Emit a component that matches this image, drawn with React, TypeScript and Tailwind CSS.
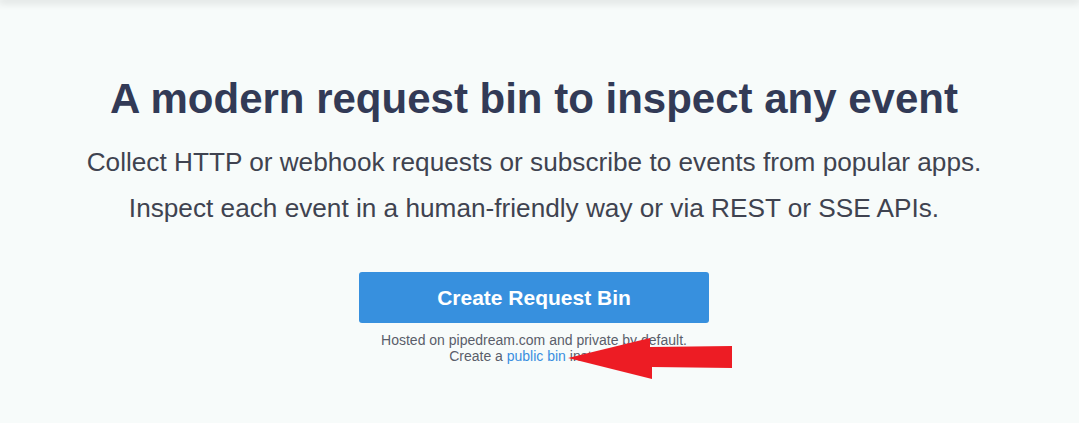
export default function App() {
  return (
    <div className="min-h-[423px] w-full bg-[#f7fbfa] relative overflow-hidden" style={{ fontFamily: '"Liberation Sans", Arial, sans-serif' }}>
      <div className="h-0 w-full shadow-[0_0_8px_2px_rgba(0,0,0,0.18)]" />
      <div className="flex flex-col items-center pt-[73px] pr-[11px] text-center">
        <h1 className="text-[42px] leading-[52px] font-bold text-[#323a56]">A modern request bin to inspect any event</h1>
        <p className="mt-[21px] text-[26.2px] leading-[32px] text-[#3f4350]">Collect HTTP or webhook requests or subscribe to events from popular apps.</p>
        <p className="mt-[14px] text-[26.2px] leading-[32px] text-[#3f4350]">Inspect each event in a human-friendly way or via REST or SSE APIs.</p>
        <button className="mt-[48px] w-[350px] h-[51px] rounded-[3px] bg-[#3790de] text-white font-bold text-[21px]">Create Request Bin</button>
        <div className="mt-[9px] text-[14px] leading-[16px] text-[#5a5e6a]">
          <div>Hosted on pipedream.com and private by default.</div>
          <div>
            Create a <a className="text-[#3a8ee0]">public bin</a> instead.
          </div>
        </div>
      </div>
      <svg className="absolute left-[566px] top-[336px]" width="170" height="46" viewBox="0 0 170 46">
        <polygon points="2,22 84,2 84,11 166,10 166,32 86,31 86,43" fill="#ed1c24" />
      </svg>
    </div>
  )
}
